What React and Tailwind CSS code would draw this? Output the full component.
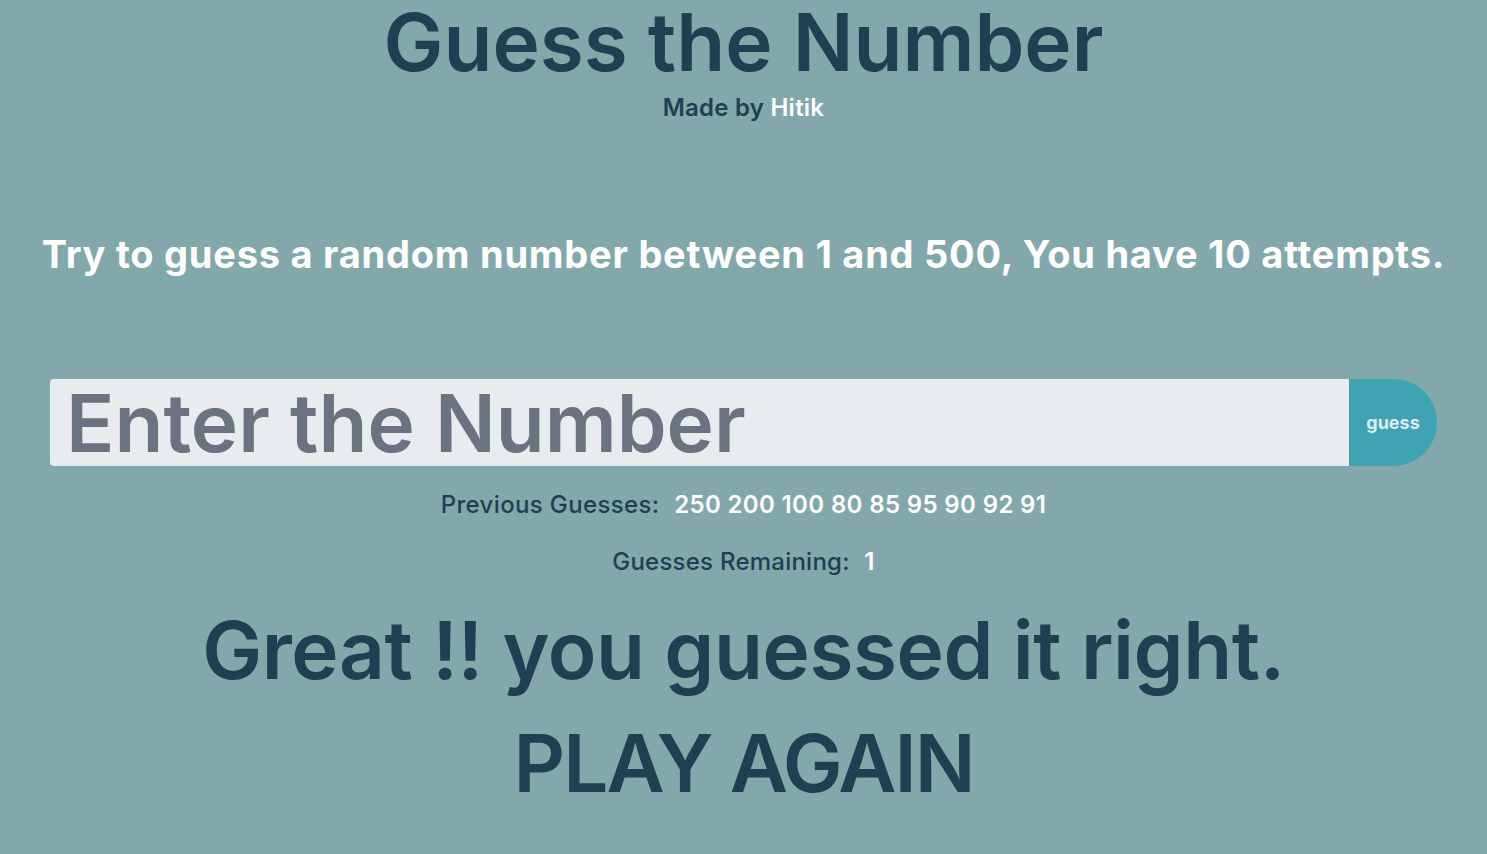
import React, { useState } from "react";

function App() {
    const [guess, setGuess] = useState("");
    const previous = [250, 200, 100, 80, 85, 95, 90, 92, 91];

    return (
        <div className="min-h-screen bg-[#82a8ab] text-center font-['Inter','Noto_Sans',sans-serif] overflow-hidden">
            <h1 className="text-[80px] leading-[84px] font-semibold text-[#213f52]">Guess the Number</h1>
            <p className="mt-[8px] text-[24px] leading-[32px] font-semibold text-[#213f52] tracking-[0.01em]">
                Made by <span className="text-white">Hitik</span>
            </p>
            <p className="mt-[106px] text-[38px] leading-[48px] font-bold text-white tracking-[0.02em]">
                Try to guess a random number between 1 and 500, You have 10 attempts.
            </p>
            <form className="flex mx-[50px] mt-[101px] h-[87px]" onSubmit={(e) => e.preventDefault()}>
                <input
                    type="number"
                    value={guess}
                    onChange={(e) => setGuess(e.target.value)}
                    placeholder="Enter the Number"
                    className="flex-1 min-w-0 bg-[#e8ecef] rounded-l-[4px] px-4 text-[80px] font-semibold text-[#4b5563] placeholder:text-[#6b7280] outline-none"
                />
                <button className="w-[88px] bg-[#3fa3b3] rounded-r-full text-[18px] font-bold text-[#dbeef0]">guess</button>
            </form>
            <p className="mt-[23px] text-[24px] leading-[32px] font-medium text-[#213f52] tracking-[0.015em]">
                Previous Guesses: <span className="ml-2 text-white font-semibold">{previous.join(" ")}</span>
            </p>
            <p className="mt-[25px] text-[24px] leading-[32px] font-medium text-[#213f52] tracking-[0.01em]">
                Guesses Remaining: <span className="ml-2 text-white font-semibold">1</span>
            </p>
            <p className="mt-[24px] text-[80px] leading-[96px] font-semibold text-[#213f52] tracking-[-0.005em]">Great !! you guessed it right.</p>
            <button className="mt-[17px] text-[80px] leading-[96px] font-semibold text-[#213f52] tracking-[-0.025em]">PLAY AGAIN</button>
        </div>
    );
}

export default App;
